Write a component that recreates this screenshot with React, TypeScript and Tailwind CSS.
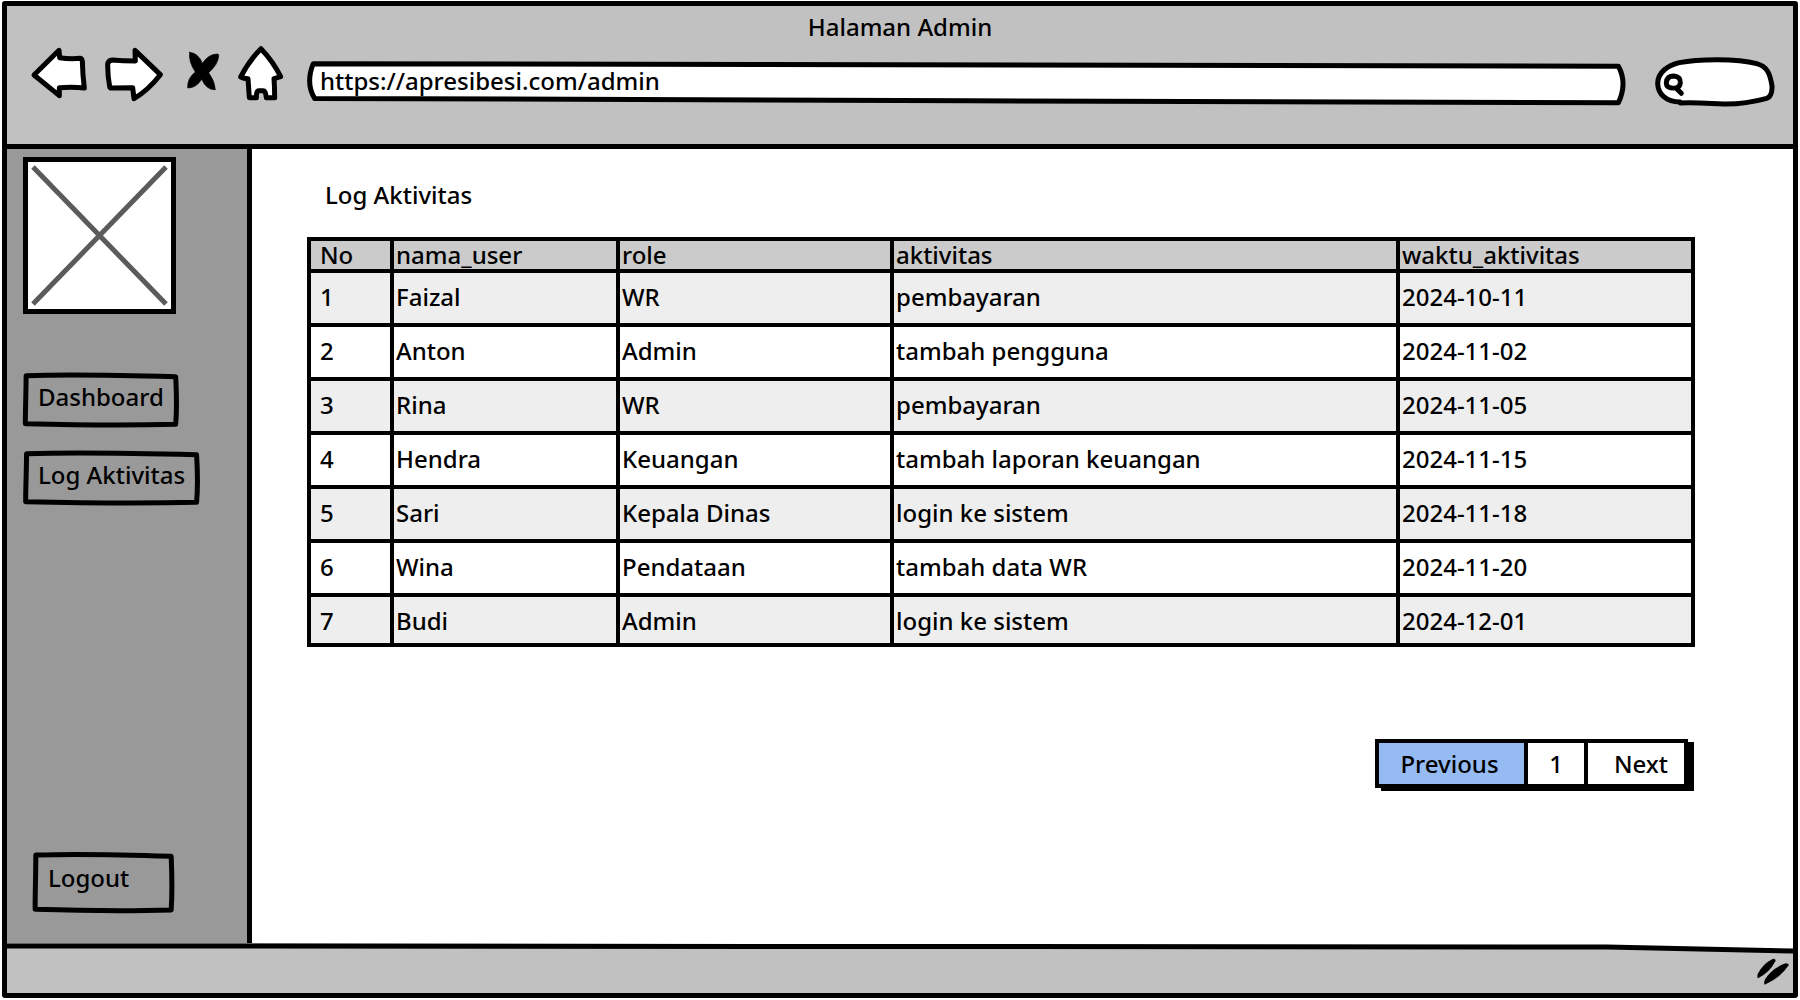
import type { ReactNode } from "react";

const rows = [
  ["1", "Faizal", "WR", "pembayaran", "2024-10-11"],
  ["2", "Anton", "Admin", "tambah pengguna", "2024-11-02"],
  ["3", "Rina", "WR", "pembayaran", "2024-11-05"],
  ["4", "Hendra", "Keuangan", "tambah laporan keuangan", "2024-11-15"],
  ["5", "Sari", "Kepala Dinas", "login ke sistem", "2024-11-18"],
  ["6", "Wina", "Pendataan", "tambah data WR", "2024-11-20"],
  ["7", "Budi", "Admin", "login ke sistem", "2024-12-01"],
];

const columns = [
  { name: "No", width: "w-[83px]" },
  { name: "nama_user", width: "w-[226px]" },
  { name: "role", width: "w-[274px]" },
  { name: "aktivitas", width: "" },
  { name: "waktu_aktivitas", width: "w-[295px]" },
];

/* Hand-drawn outline that stretches with the box it decorates. */
function SketchOutline({ d, fill = "none" }: { d: string; fill?: string }) {
  return (
    <svg
      aria-hidden="true"
      className="pointer-events-none absolute inset-0 h-full w-full overflow-visible"
      viewBox="0 0 100 100"
      preserveAspectRatio="none"
    >
      <path d={d} fill={fill} stroke="#000" strokeWidth="5" strokeLinejoin="round" vectorEffect="non-scaling-stroke" />
    </svg>
  );
}

const BUTTON_OUTLINE =
  "M2 5 C25 3 60 4 98 7 C98.500 35 99 60 98 95 C70 97 45 97 1.500 94 C1.500 65 2 35 2 5 Z";

function SideButton({ children, className }: { children: ReactNode; className: string }) {
  return (
    <button type="button" className={`relative px-[15px] text-left ${className}`}>
      <SketchOutline d={BUTTON_OUTLINE} />
      {children}
    </button>
  );
}

function ToolButton({ label, box, className, children }: { label: string; box: string; className: string; children: ReactNode }) {
  return (
    <button type="button" aria-label={label} className={className}>
      <svg viewBox={box} className="h-full w-full" fill="#fff" stroke="#000" strokeWidth="15" strokeLinejoin="round" strokeLinecap="round">
        {children}
      </svg>
    </button>
  );
}

export default function App() {
  return (
    <div className="flex min-h-screen flex-col bg-white px-[2px] pt-[1px] pb-[2px] font-['Noto_Sans',sans-serif] text-[24px] leading-8 font-medium text-black">
      <div className="flex grow flex-col rounded-[3px] border-[5px] border-black">
        <header className="border-b-[5px] border-black bg-[#c1c1c1] pt-[5px] pb-[39px]">
          <h1 className="text-center">Halaman Admin</h1>
          <div className="mt-[2px] flex h-[60px] items-start pr-[18px] pl-[23px]">
            <ToolButton label="Back" box="30 45 180 165" className="h-[55px] w-[60px] shrink-0">
              <path d="M42 135 L117 61 L119 83 Q150 88 180 85 Q186 86 187 94 Q188 135 193 174 Q158 170 118 173 L118 197 Z" />
            </ToolButton>
            <ToolButton label="Forward" box="250 45 180 180" className="ml-[13px] h-[60px] w-[60px] shrink-0">
              <path d="M422 134 L346 61 L347 93 Q310 93 278 90 Q265 91 264 104 Q264 140 270 170 Q271 175 278 174 L339 173 L343 206 Q386 180 422 134 Z" />
            </ToolButton>
            <ToolButton label="Stop" box="500 45 105 165" className="ml-[23px] h-[55px] w-[35px] shrink-0">
              <path
                fill="#000"
                strokeWidth="2"
                d="M511 67 Q537 69 549 100 Q568 72 594 72 Q599 72 598 78 Q596 104 568 128 Q587 154 588 179 Q562 181 547 148 Q531 174 505 174 Q503 145 528 126 Q507 95 511 67 Z"
              />
            </ToolButton>
            <ToolButton label="Home" box="645 45 150 180" className="ml-[15px] h-[60px] w-[50px] shrink-0">
              <path d="M720 56 Q684 92 659 141 Q668 146 681 146 L685 203 L706 203 Q706 182 712 182 L727 182 Q734 182 736 203 L761 203 Q761 170 759 146 L779 140 Q757 95 720 56 Z" />
            </ToolButton>
            <div className="relative mt-4 ml-[22px] h-[44px] grow">
              <SketchOutline
                fill="#fff"
                d="M.400 6 C30 3 60 9 99.500 12 Q100.200 50 99.500 95 C60 99 40 82 .500 85 Q-.200 50 .400 6 Z"
              />
              <input
                type="text"
                aria-label="Address"
                defaultValue="https://apresibesi.com/admin"
                className="relative h-full w-full bg-transparent px-[12px] pb-[5px] outline-none"
              />
            </div>
            <div className="relative mt-[11px] ml-[30px] h-[52px] w-[120px] shrink-0">
              <svg
                aria-hidden="true"
                viewBox="45 18 360 156"
                className="absolute inset-0 h-full w-full"
                fill="none"
                stroke="#000"
                strokeWidth="15"
                strokeLinecap="round"
                strokeLinejoin="round"
              >
                <path
                  fill="#fff"
                  d="M120 156 C78 156 54 132 53 100 C54 66 84 46 118 38 C170 27 290 24 350 41 C382 50 390 70 396 108 C397 132 391 141 380 145 C340 156 300 163 250 162 C200 160 170 157 120 159"
                />
                <path d="M108 114 C88 116 79 110 79 98 C80 84 88 78 102 78 C116 79 122 87 121 99 C120 108 117 112 108 114 L124 130" />
              </svg>
              <input type="search" aria-label="Search" className="relative h-full w-full bg-transparent pr-3 pl-[32px] text-[20px] outline-none" />
            </div>
          </div>
        </header>

        <div className="flex grow">
          <aside className="flex w-[245px] shrink-0 flex-col items-start border-r-[5px] border-black bg-[#999] pt-2 pb-[30px] pl-4">
            <div className="h-[157px] w-[153px] border-[5px] border-black bg-white">
              <svg viewBox="0 0 143 147" className="h-full w-full" stroke="#5b5b5b" strokeWidth="5" role="img" aria-label="Image placeholder">
                <path d="M5 5 L138 142 M138 5 L5 142" />
              </svg>
            </div>
            <nav className="mt-[59px] flex flex-col items-start gap-6">
              <SideButton className="pt-[8px] pb-[14px]">Dashboard</SideButton>
              <SideButton className="pt-[8px] pb-[14px]">Log Aktivitas</SideButton>
            </nav>
            <SideButton className="mt-auto ml-[10px] w-[141px] pt-[10px] pb-[19px]">Logout</SideButton>
          </aside>

          <main className="grow pt-[30px] pr-[98px] pl-[55px]">
            <h2 className="pl-[18px]">Log Aktivitas</h2>
            <table className="mt-[26px] w-full table-fixed border-collapse border-4 border-black text-left leading-7">
              <thead>
                <tr className="bg-[#cbcbcb]">
                  {columns.map((c, i) => (
                    <th key={c.name} scope="col" className={`border-4 border-black py-0 pr-0 font-medium ${c.width} ${i === 0 ? "pl-[9px]" : "pl-[2px]"}`}>
                      {c.name}
                    </th>
                  ))}
                </tr>
              </thead>
              <tbody>
                {rows.map((row, r) => (
                  <tr key={row[0]} className="odd:bg-[#eee]">
                    {row.map((cell, i) => (
                      <td
                        key={i}
                        className={`border-4 border-black pt-[10px] pr-0 ${r === rows.length - 1 ? "pb-2" : "pb-3"} ${i === 0 ? "pl-[9px]" : "pl-[2px]"}`}
                      >
                        {cell}
                      </td>
                    ))}
                  </tr>
                ))}
              </tbody>
            </table>
            <nav aria-label="Pagination" className="mt-[92px] mr-[7px] flex justify-end">
              <div className="flex divide-x-4 divide-black border-4 border-black shadow-[6px_3px_0_0_#000]">
                <button type="button" className="h-[41px] w-[149px] bg-[#95bbf2] pr-1">Previous</button>
                <button type="button" className="w-[60px] bg-white">1</button>
                <button type="button" className="w-[96px] bg-white pl-[10px]">Next</button>
              </div>
            </nav>
          </main>
        </div>

        <footer className="relative flex h-[50px] items-center justify-end bg-[#c1c1c1] pr-1">
          <svg aria-hidden="true" viewBox="0 0 1786 12" preserveAspectRatio="none" className="absolute inset-x-0 top-0 h-3 w-full">
            <path d="M245 0 L1786 0 L1786 8 L1600 3 Z" fill="#fff" />
            <path d="M0 3 L245 3 L1600 4 L1786 8" fill="none" stroke="#000" strokeWidth="5" />
          </svg>
          <svg aria-hidden="true" viewBox="50 64 96 84" className="mt-[8px] h-[28px] w-[32px]">
            <path d="M98 66 Q108 66 105 74 Q88 108 53 125 Q50 124 52 112 Q66 82 98 66 Z" />
            <path d="M136 80 Q146 80 145 86 Q120 124 73 144 Q70 140 73 130 Q94 95 136 80 Z" />
          </svg>
        </footer>
      </div>
    </div>
  );
}
